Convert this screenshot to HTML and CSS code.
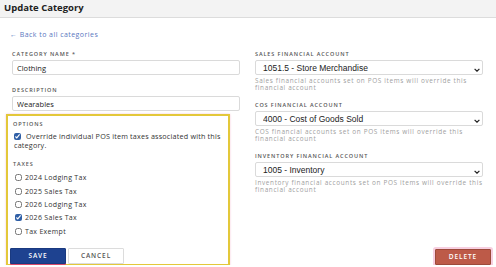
FILE: index.html
```html
<!DOCTYPE html>
<html lang="en">
<head>
  <meta charset="UTF-8">
  <meta name="viewport" content="width=device-width, initial-scale=1.0">
  <title>Update Category</title>
  <link rel="stylesheet" href="styles.css">
</head>
<body>
  <div class="topbar">
    <h1>Update Category</h1>
  </div>

  <div class="content">
    <a class="back-link" href="#">&larr; Back to all categories</a>

    <div class="columns">
      <div class="column left">
        <div class="field">
          <label class="field-label">Category Name *</label>
          <input class="text-input" type="text" value="Clothing">
        </div>
        <div class="field">
          <label class="field-label">Description</label>
          <input class="text-input" type="text" value="Wearables">
        </div>

        <div class="options-box">
          <div class="field-label">Options</div>
          <label class="check-row wrap">
            <input type="checkbox" checked>
            <span>Override individual POS item taxes associated with this category.</span>
          </label>

          <div class="field-label taxes-label">Taxes</div>
          <label class="check-row"><input type="checkbox"> <span>2024 Lodging Tax</span></label>
          <label class="check-row"><input type="checkbox"> <span>2025 Sales Tax</span></label>
          <label class="check-row"><input type="checkbox"> <span>2026 Lodging Tax</span></label>
          <label class="check-row"><input type="checkbox" checked> <span>2026 Sales Tax</span></label>
          <label class="check-row"><input type="checkbox"> <span>Tax Exempt</span></label>

          <div class="actions">
            <button class="save-button">Save</button>
            <button class="cancel-button">Cancel</button>
          </div>
        </div>
      </div>

      <div class="column right">
        <div class="field">
          <label class="field-label">Sales Financial Account</label>
          <div class="select-wrap">
            <select class="select-input">
              <option>1051.5 - Store Merchandise</option>
            </select>
            <svg class="chevron" viewBox="0 0 10 6" width="6" height="4"><path d="M1 1l4 4 4-4" fill="none" stroke="#222" stroke-width="2"/></svg>
          </div>
          <p class="help">Sales financial accounts set on POS items will override this financial account</p>
        </div>
        <div class="field">
          <label class="field-label">COS Financial Account</label>
          <div class="select-wrap">
            <select class="select-input">
              <option>4000 - Cost of Goods Sold</option>
            </select>
            <svg class="chevron" viewBox="0 0 10 6" width="6" height="4"><path d="M1 1l4 4 4-4" fill="none" stroke="#222" stroke-width="2"/></svg>
          </div>
          <p class="help">COS financial accounts set on POS items will override this financial account</p>
        </div>
        <div class="field">
          <label class="field-label">Inventory Financial Account</label>
          <div class="select-wrap">
            <select class="select-input">
              <option>1005 - Inventory</option>
            </select>
            <svg class="chevron" viewBox="0 0 10 6" width="6" height="4"><path d="M1 1l4 4 4-4" fill="none" stroke="#222" stroke-width="2"/></svg>
          </div>
          <p class="help">Inventory financial accounts set on POS items will override this financial account</p>
        </div>

        <button class="delete-button">Delete</button>
      </div>
    </div>
  </div>
</body>
</html>
```

FILE: styles.css
```css
body {
  margin: 0;
  font-family: "Open Sans", Arial, sans-serif;
  color: #333;
  background: #fff;
  overflow: hidden;
}
.topbar {
  height: 17px;
  background-color: #f3f3f3;
  border-bottom: 1px solid #dcdcdc;
  padding-left: 4px;
}
.topbar h1 {
  margin: 0;
  font-size: 9.5px;
  line-height: 16px;
  font-weight: 700;
  color: #222;
}
.content {
  padding: 0 13px 0 12px;
}
.back-link {
  display: block;
  margin: 12px 0 0 -2px;
  font-size: 7px;
  line-height: 10px;
  letter-spacing: 0.45px;
  color: #5a77c0;
  text-decoration: none;
}
.columns {
  display: grid;
  grid-template-columns: 228px 228px;
  column-gap: 15px;
  margin-top: 10px;
  height: 215px;
}
.column {
  display: flex;
  flex-direction: column;
}
.field-label {
  display: block;
  font-size: 5.5px;
  line-height: 8px;
  font-weight: 600;
  letter-spacing: 0.9px;
  text-transform: uppercase;
  color: #555;
}
.text-input, .select-input {
  display: block;
  box-sizing: border-box;
  width: 100%;
  height: 15px;
  margin-top: 2px;
  border: 1px solid #dadada;
  border-radius: 2px;
  background: #fff;
  color: #222;
}
.text-input {
  padding: 0 4px;
  font-family: "Open Sans", Arial, sans-serif;
  font-size: 7.5px;
}
.left .field + .field {
  margin-top: 11px;
}
.select-wrap {
  position: relative;
}
.select-input {
  appearance: none;
  padding: 0 7px;
  font-family: "Liberation Sans", Arial, sans-serif;
  font-size: 8.5px;
}
.chevron {
  position: absolute;
  right: 3px;
  top: 8px;
}
.help {
  margin: 2px 0 0;
  font-size: 6.4px;
  line-height: 7px;
  letter-spacing: 0.65px;
  color: #a0a0a0;
}
.right .field + .field {
  margin-top: 10px;
}
.options-box {
  flex: 1;
  margin: 3px 10px 0 -6px;
  padding: 4px 1px 0 5px;
  border: 2px solid #e3c83a;
  box-shadow: 0 0 2px #f5c8d8;
}
.check-row {
  display: flex;
  align-items: center;
  font-size: 7px;
  line-height: 9px;
  letter-spacing: 0.3px;
  color: #333;
  height: 13.4px;
  padding-left: 2px;
}
.check-row input {
  width: 7px;
  height: 7px;
  margin: 0 3px 0 0;
  accent-color: #2f5fa6;
}
.check-row.wrap {
  display: block;
  height: auto;
  margin-top: 4px;
  padding-left: 1px;
  font-size: 7.2px;
  line-height: 8.5px;
  letter-spacing: 0.2px;
}
.check-row.wrap input {
  vertical-align: -1px;
}
.taxes-label {
  margin-top: 11px;
  margin-bottom: 3px;
}
.actions {
  display: flex;
  gap: 2px;
  margin: 10px 0 0 -3px;
}
.save-button, .cancel-button, .delete-button {
  height: 16px;
  width: 56px;
  font-family: "Open Sans", Arial, sans-serif;
  font-size: 6.5px;
  font-weight: 600;
  letter-spacing: 0.9px;
  text-transform: uppercase;
  border-radius: 1px;
  cursor: pointer;
  padding: 0;
}
.save-button {
  background-color: #1e4290;
  color: #fff;
  border: 1px solid #1a3a80;
  box-shadow: 0 1px 0 #d84a6a;
}
.cancel-button {
  background-color: #fff;
  color: #555;
  border: 1px solid #dcdcdc;
}
.delete-button {
  margin-top: auto;
  align-self: flex-end;
  margin-right: -8px;
  margin-bottom: 1px;
  background-color: #bd5a48;
  color: #fff;
  border: 1px solid #9c4a3a;
  box-shadow: 0 0 0 2px #f7cfe0;
}
```
